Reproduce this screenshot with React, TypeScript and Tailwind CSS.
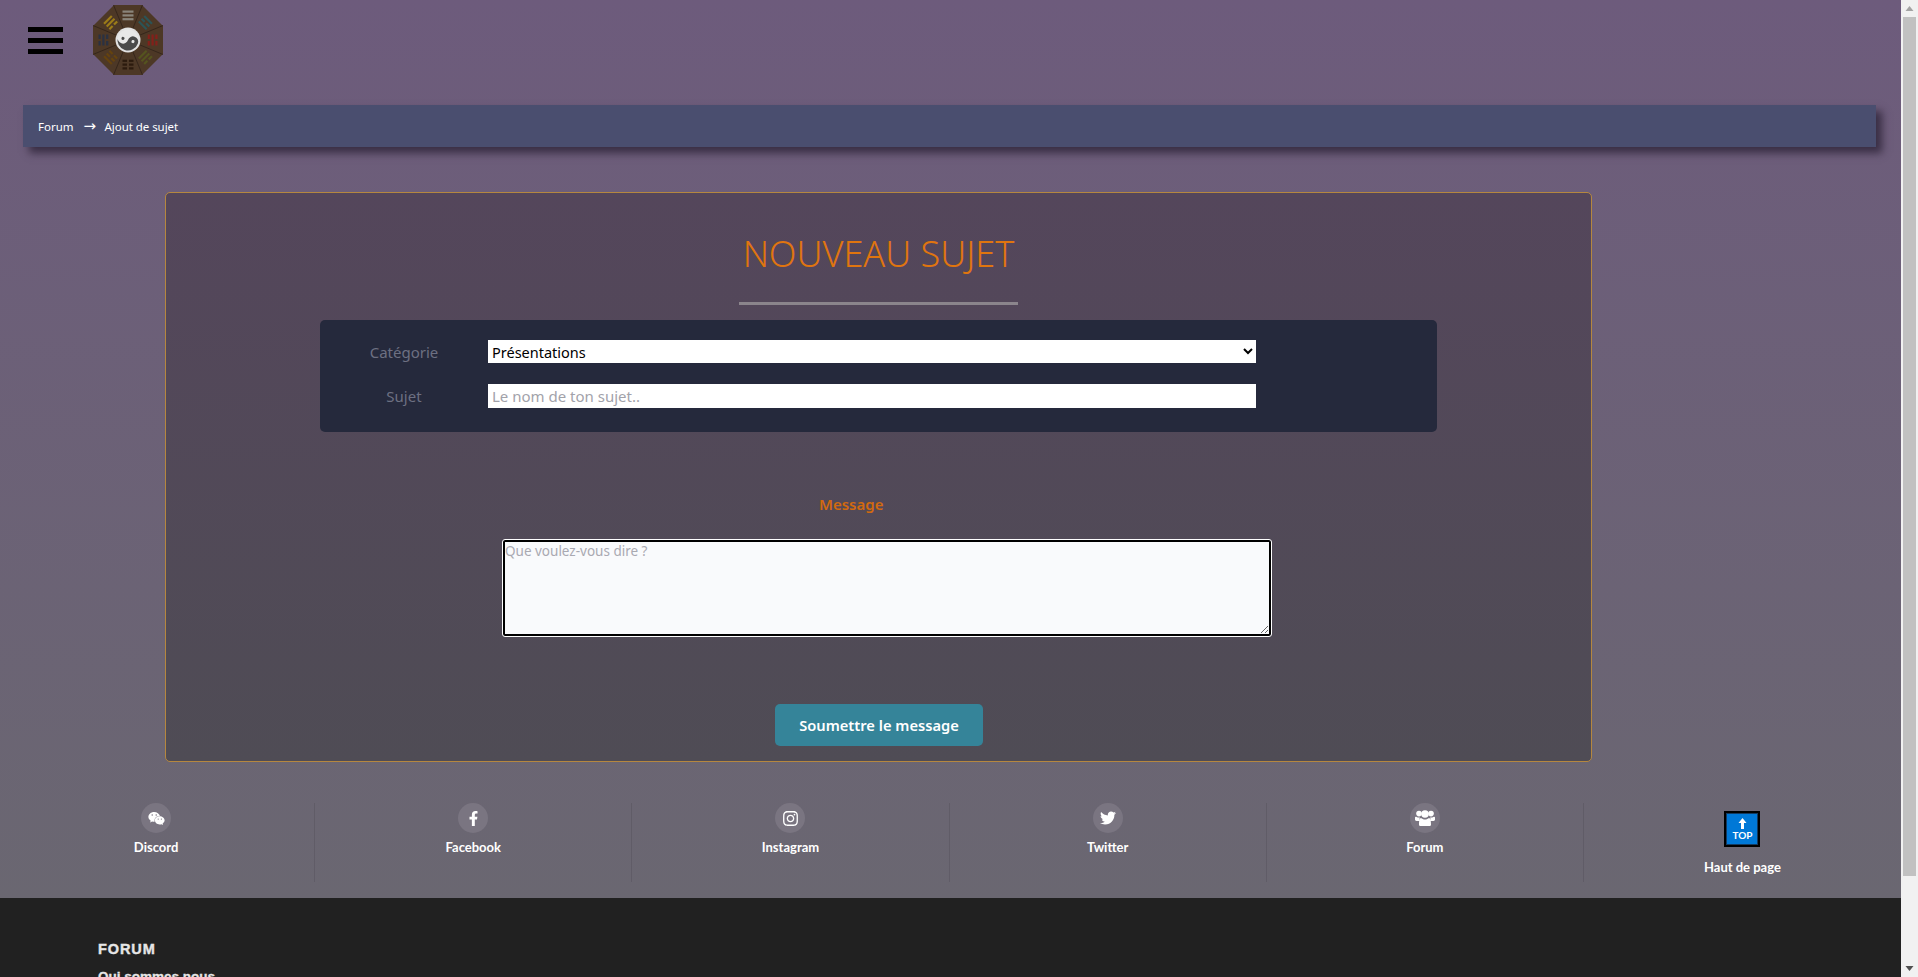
import React from "react";
import { FaWeixin, FaFacebookF, FaInstagram, FaTwitter } from "react-icons/fa";

// font awesome 4 style group icon
const UsersIcon = () => (
  <svg width="20" height="17" viewBox="0 0 20 17" fill="#fff">
    <circle cx="4" cy="3.6" r="2.8" />
    <circle cx="16" cy="3.6" r="2.8" />
    <circle cx="10" cy="4" r="3.8" />
    <path d="M0 7.5C0 6.7.8 6.6 1.6 7c1.4.7 2.6.6 3.2.3C4.4 8.400 4.700 10 5 11H1.500C.6 11 0 10.500 0 9.600z" />
    <path d="M20 7.500C20 6.700 19.200 6.600 18.400 7c-1.400.7-2.600.6-3.200.3C15.600 8.400 15.300 10 15 11h3.500c.9 0 1.500-.5 1.500-1.400z" />
    <path d="M5 16c-.6 0-1-.5-1-1.200C4 12 4.300 8 6 8c1 .8 2.500 1.500 4 1.500S13 8.800 14 8c1.700 0 2 4 2 6.800 0 .7-.4 1.200-1 1.200z" />
  </svg>
);

const socials = [
  { label: "Discord", icon: <FaWeixin className="text-[17px]" /> },
  { label: "Facebook", icon: <FaFacebookF className="text-[15px]" /> },
  { label: "Instagram", icon: <FaInstagram className="text-[17px]" /> },
  { label: "Twitter", icon: <FaTwitter className="text-[16px]" /> },
  { label: "Forum", icon: <UsersIcon /> },
];

const trigrams = [
  { angle: 0, color: "#8a857b", lines: [0, 0, 0] },
  { angle: 45, color: "#2c5456", lines: [0, 1, 0] },
  { angle: 90, color: "#84201a", lines: [1, 0, 1] },
  { angle: 135, color: "#55541f", lines: [1, 0, 0] },
  { angle: 180, color: "#2c1b0e", lines: [1, 1, 1] },
  { angle: 225, color: "#65430f", lines: [0, 1, 1] },
  { angle: 270, color: "#2a3142", lines: [1, 0, 1] },
  { angle: 315, color: "#9c7c18", lines: [0, 0, 1] },
];

// bagua logo
const Logo = () => (
  <svg width="70" height="70" viewBox="0 0 70 70">
    <polygon points="21,0 49,0 70,21 70,49 49,70 21,70 0,49 0,21" fill="#4d3826" />
    {[22.5, 67.5, 112.5, 157.5, 202.5, 247.5, 292.5, 337.5].map((a) => (
      <line key={a} x1="35" y1="35" x2="35" y2="-3" stroke="#33241a" strokeWidth="0.8" transform={`rotate(${a} 35 35)`} />
    ))}
    {trigrams.map((t) => (
      <g key={t.angle} transform={`rotate(${t.angle} 35 35)`}>
        {t.lines.map((broken, i) =>
          broken ? (
            <g key={i} fill={t.color}>
              <rect x="29.500" y={5.500 + i * 3.800} width="4.500" height="2.200" />
              <rect x="36" y={5.500 + i * 3.800} width="4.500" height="2.200" />
            </g>
          ) : (
            <rect key={i} x="29.500" y={5.500 + i * 3.800} width="11" height="2.200" fill={t.color} />
          )
        )}
      </g>
    ))}
    <circle cx="35" cy="35" r="12.500" fill="#e2e2e2" />
    <circle cx="35" cy="35" r="10.500" fill="#e8e8e8" />
    <g transform="rotate(18 35 35) translate(35 35) scale(1.050) translate(-35 -35)">
      <path d="M25 35a10 10 0 0 0 20 0a5 5 0 0 0-10 0a5 5 0 0 1-10 0z" fill="#4a4a4a" />
      <circle cx="30" cy="35" r="1.500" fill="#4a4a4a" />
      <circle cx="40" cy="35" r="1.500" fill="#e8e8e8" />
    </g>
  </svg>
);

const Scrollbar = () => (
  <div className="w-[17px] h-full shrink-0 bg-[#f1f1f1] flex flex-col items-center">
    <svg width="9" height="17" viewBox="0 0 9 17" className="shrink-0">
      <path d="M4.500 6L8.500 11H0.500z" fill="#a3a3a3" />
    </svg>
    <div className="w-[13px] h-[859px] bg-[#c1c1c1] shrink-0" />
    <div className="flex-1" />
    <svg width="9" height="17" viewBox="0 0 9 17" className="shrink-0">
      <path d="M0.500 6H8.500L4.500 11z" fill="#505050" />
    </svg>
  </div>
);

export default function App() {
  return (
    <div className="flex h-screen w-full overflow-hidden font-['Noto_Sans',sans-serif]">
      <div className="flex-1 min-w-0 flex flex-col">
        <div className="h-[898px] shrink-0 bg-gradient-to-b from-[#6d5b7c] to-[#6a6771]">
          {/* Header */}
          <div className="flex items-center pl-[28px] pt-[5px] gap-[30px]">
            <button className="flex flex-col gap-[6px] w-[35px]">
              <span className="block h-[5px] bg-black" />
              <span className="block h-[5px] bg-black" />
              <span className="block h-[5px] bg-black" />
            </button>
            <Logo />
          </div>

          {/* Breadcrumb */}
          <div className="ml-[23px] mr-[25px] mt-[30px] h-[42px] pl-[15px] pt-[1px] flex items-center text-[11.5px] text-white bg-[#4a4e6f] shadow-[6px_6px_8px_#392e44]">
            <span>Forum</span>
            <span className="mx-[10px] w-[11px] text-center text-[15px] leading-none font-['DejaVu_Sans',sans-serif]">→</span>
            <span className="tracking-[-0.050px]">Ajout de sujet</span>
          </div>

          {/* Form card */}
          <div className="ml-[165px] mt-[45px] w-[1427px] h-[570px] border border-[#b5873f] rounded-[5px] bg-gradient-to-b from-[#54465b] to-[#4f4c55]">
            <h1 className="pt-[32px] text-center text-[36px] leading-[58px] font-light text-[#e0750f]">NOUVEAU SUJET</h1>
            <div className="mx-auto mt-[19px] w-[279px] h-[3px] bg-[#8b858c]" />

            <div className="mx-auto mt-[15px] w-[1117px] h-[112px] pt-[20px] bg-[#25293c] rounded-[5px]">
              <div className="flex items-center h-[23px]">
                <label className="w-[168px] pt-[1px] text-center text-[15px] text-[#6d7082]">Catégorie</label>
                <select className="w-[768px] h-[23px] bg-white text-black text-[14.500px] pr-[1px]">
                  <option>Présentations</option>
                </select>
              </div>
              <div className="flex items-center h-[24px] mt-[21px]">
                <label className="w-[168px] pt-[1px] text-center text-[15px] text-[#6d7082]">Sujet</label>
                <input
                  placeholder="Le nom de ton sujet.."
                  className="w-[768px] h-[24px] bg-white pl-[4px] text-[15px] placeholder:text-[#a2a2aa]"
                />
              </div>
            </div>

            <div className="ml-[653px] mt-[61px] w-[64px] text-center text-[15px] leading-[22px] font-semibold text-[#d1690f] whitespace-nowrap">
              Message
            </div>

            <textarea
              placeholder="Que voulez-vous dire ?"
              className="block ml-[337px] mt-[25px] w-[768px] h-[96px] border-2 border-black outline outline-white rounded-[2px] bg-[#f9fafc] text-[13.500px] leading-[18px] placeholder:text-[#a9a9b2]"
            />

            <button className="block ml-[609px] mt-[68px] w-[208px] h-[42px] rounded-[5px] bg-[#358499] text-white text-[14.700px] font-semibold">
              Soumettre le message
            </button>
          </div>

          {/* Social row */}
          <div className="flex ml-[-2px] mt-[41px] h-[79px] font-['Lato',sans-serif] text-[13px] font-bold text-white">
            {socials.map((s) => (
              <div key={s.label} className="w-[317.200px] shrink-0 border-r border-[#605c67] flex flex-col items-center">
                <div className="w-[30px] h-[30px] rounded-full bg-[#7a7581] flex items-center justify-center">{s.icon}</div>
                <span className="mt-[4px] leading-[20px]">{s.label}</span>
              </div>
            ))}
            <div className="w-[317px] shrink-0 flex flex-col items-center pt-[8px]">
              <div className="w-[36px] h-[36px] bg-[#0078d7] border-2 border-black shadow-[inset_0_0_0_1px_#123a60] flex flex-col items-center justify-center text-white leading-none">
                <svg width="9" height="11" viewBox="0 0 9 11">
                  <path d="M4.500 0L8.500 5H6V11H3V5H0.500z" fill="#fff" />
                </svg>
                <span className="text-[10px] font-bold mt-[1px]">TOP</span>
              </div>
              <span className="mt-[10px] leading-[20px]">Haut de page</span>
            </div>
          </div>
        </div>

        {/* Footer */}
        <div className="flex-1 bg-[#212121] pl-[98px] pt-[41px] text-[#e6e6e6] font-['Liberation_Sans',sans-serif] font-bold overflow-hidden">
          <div className="text-[14.500px] leading-[20px] tracking-[0.900px] [-webkit-text-stroke:0.400px]">FORUM</div>
          <div className="text-[13.500px] leading-[20px] mt-[8px] [-webkit-text-stroke:0.300px]">Qui sommes nous</div>
        </div>
      </div>
      <Scrollbar />
    </div>
  );
}
